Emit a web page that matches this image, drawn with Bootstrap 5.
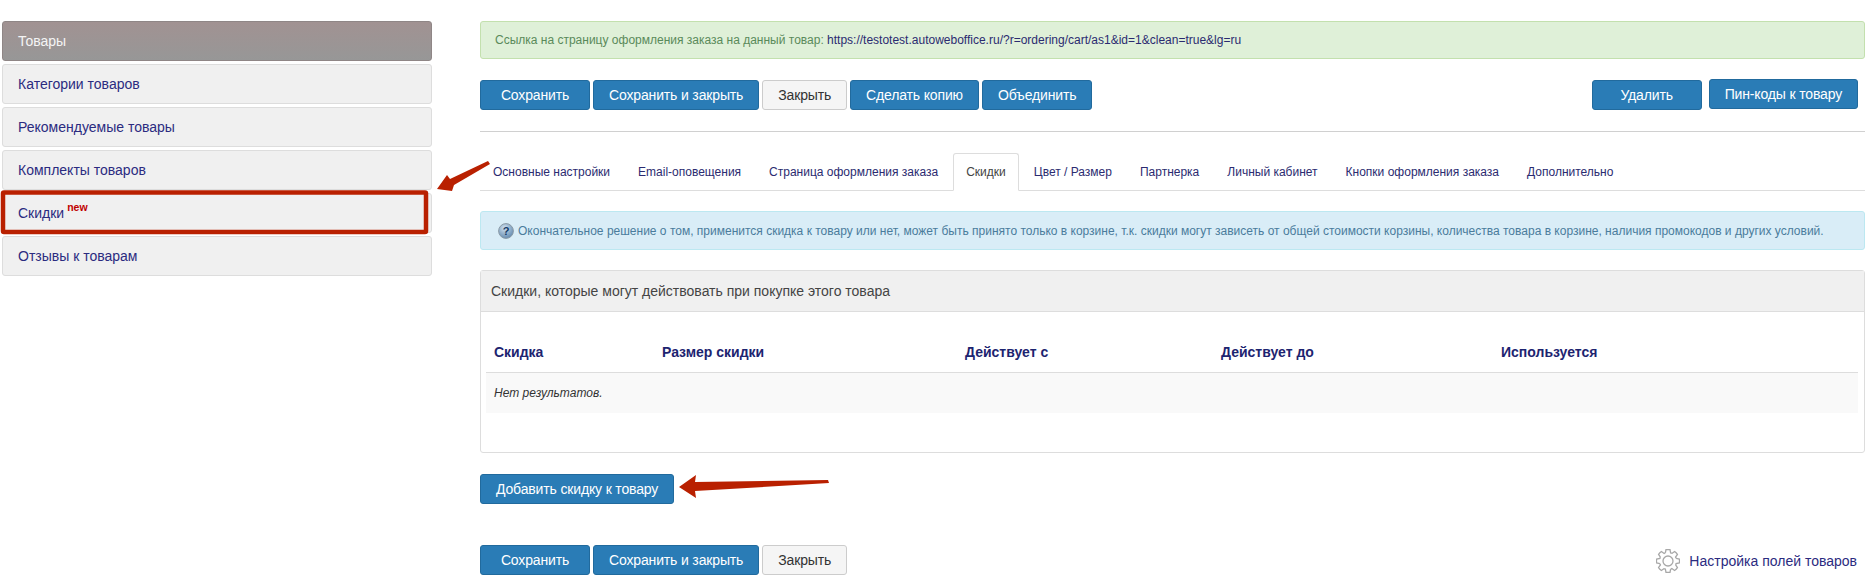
<!DOCTYPE html>
<html lang="ru">
<head>
    <meta charset="UTF-8">
    <meta name="viewport" content="width=device-width, initial-scale=1.0">
    <title>Скидки</title>
    <link href="https://cdn.jsdelivr.net/npm/bootstrap@5.3.0/dist/css/bootstrap.min.css" rel="stylesheet">
    <style>
        body {
            font-family: "Liberation Sans", Arial, sans-serif;
            font-size: 14px;
            color: #333;
            background: #fff;
            overflow: hidden;
        }
        .page-wrap { position: relative; height: 585px; }
        /* боковое меню */
        .side-menu { width: 430px; margin: 21px 0 0 2px; flex: none; gap: 3px; }
        .side-link {
            display: flex;
            align-items: center;
            height: 40px;
            padding: 0 15px;
            background: #f0f0f0;
            border: 1px solid #ddd;
            border-radius: 3px;
            color: #2b2b80;
            text-decoration: none;
        }
        .side-link.is-active {
            background: linear-gradient(#a19292, #979797);
            border-color: #8f8686;
            color: #f4f4f4;
        }
        .side-new { color: #c00000; font-size: 10.5px; font-weight: bold; position: relative; top: -5px; margin-left: 3px; }
        /* основная часть */
        .main-col { width: 1385px; margin: 21px 0 0 48px; flex: none; }
        .note-box {
            font-size: 12px;
            line-height: 16px;
            border-radius: 3px;
            margin-bottom: 21px;
            padding: 10px 14px;
        }
        .note-ok { background: #dff0d8; border: 1px solid #c3e0ae; color: #5a8a5a; height: 38px; }
        .note-ok span { color: #2b2b70; }
        .note-info {
            background: #d9edf7;
            border: 1px solid #bce8f1;
            color: #4a7c9c;
            height: 39px;
            margin-bottom: 20px;
            padding: 10px 14px 10px 17px;
        }
        .btn-blue, .btn-plain {
            font-size: 14px;
            line-height: 28px;
            height: 30px;
            padding: 0 15px;
            border-radius: 3px;
            white-space: nowrap;
            letter-spacing: -0.15px;
        }
        .btn-blue { background: #2a7cb6; border: 1px solid #216a9d; color: #fff; }
        .btn-blue:hover { background: #23709f; border-color: #216a9d; color: #fff; }
        .btn-plain { background: #f5f5f5; border: 1px solid #ccc; color: #333; }
        .btn-wide { min-width: 110px; }
        .btn-up { margin-top: -1px; }
        .btn-row { gap: 3px; }
        .btn-row-right { gap: 7px; padding-right: 7px; }
        .top-rule { border-top: 1px solid #d0d0d0; margin: 21px 0; opacity: 1; }
        .tabs-line { border-bottom: 1px solid #ddd; margin-bottom: 20px; height: 38px; }
        .tabs-line .nav-link {
            font-size: 12px;
            line-height: 37px;
            height: 38px;
            padding: 0 12px;
            margin-right: 2px;
            color: #2b2b70;
            border-radius: 3px 3px 0 0;
        }
        .tabs-line .nav-link.active { color: #444; border-color: #ddd #ddd #fff; }
        .disc-panel { height: 183px; border: 1px solid #ddd; border-radius: 3px; margin-bottom: 21px; }
        .disc-head { height: 41px; line-height: 40px; padding: 0 10px; background: #f0f0f0; border-bottom: 1px solid #ddd; color: #444; }
        .disc-body { padding: 20px 6px 0 5px; }
        .disc-table { table-layout: fixed; margin: 0; width: 100%; }
        .disc-table th {
            height: 40px;
            padding: 2px 8px 0;
            color: #1d2470;
            font-size: 14px;
            border-bottom: 1px solid #ddd;
            vertical-align: middle;
        }
        .disc-table td { height: 41px; padding: 0 8px; background: #f9f9f9; border: 0; font-size: 12px; font-style: italic; color: #333; vertical-align: middle; }
        .add-row { margin-bottom: 41px; }
        .fields-link { color: #2b2b80; text-decoration: none; gap: 9px; padding-right: 8px; margin-top: 2px; }
        .overlay-marks { position: absolute; left: 0; top: 0; pointer-events: none; }
    </style>
</head>
<body>

<div class="page-wrap d-flex align-items-start">
    <!-- Меню слева -->
    <div class="side-menu d-flex flex-column">
        <a href="#" class="side-link is-active">Товары</a>
        <a href="#" class="side-link">Категории товаров</a>
        <a href="#" class="side-link">Рекомендуемые товары</a>
        <a href="#" class="side-link">Комплекты товаров</a>
        <a href="#" class="side-link">Скидки <span class="side-new">new</span></a>
        <a href="#" class="side-link">Отзывы к товарам</a>
    </div>

    <div class="main-col">
        <div class="note-box note-ok">Ссылка на страницу оформления заказа на данный товар: <span>https://testotest.autoweboffice.ru/?r=ordering/cart/as1&amp;id=1&amp;clean=true&amp;lg=ru</span></div>

        <div class="d-flex justify-content-between">
            <div class="d-flex btn-row">
                <button class="btn btn-blue btn-wide">Сохранить</button>
                <button class="btn btn-blue">Сохранить и закрыть</button>
                <button class="btn btn-plain">Закрыть</button>
                <button class="btn btn-blue">Сделать копию</button>
                <button class="btn btn-blue btn-wide">Объединить</button>
            </div>
            <div class="d-flex btn-row-right">
                <button class="btn btn-blue btn-wide">Удалить</button>
                <button class="btn btn-blue btn-up">Пин-коды к товару</button>
            </div>
        </div>

        <hr class="top-rule">

        <ul class="nav nav-tabs tabs-line">
            <li class="nav-item"><a class="nav-link" href="#">Основные настройки</a></li>
            <li class="nav-item"><a class="nav-link" href="#">Email-оповещения</a></li>
            <li class="nav-item"><a class="nav-link" href="#">Страница оформления заказа</a></li>
            <li class="nav-item"><a class="nav-link active" href="#">Скидки</a></li>
            <li class="nav-item"><a class="nav-link" href="#">Цвет / Размер</a></li>
            <li class="nav-item"><a class="nav-link" href="#">Партнерка</a></li>
            <li class="nav-item"><a class="nav-link" href="#">Личный кабинет</a></li>
            <li class="nav-item"><a class="nav-link" href="#">Кнопки оформления заказа</a></li>
            <li class="nav-item"><a class="nav-link" href="#">Дополнительно</a></li>
        </ul>

        <div class="note-box note-info d-flex align-items-center gap-1">
            <svg width="16" height="16" viewBox="0 0 16 16">
                <defs>
                    <radialGradient id="qBall" cx="40%" cy="30%" r="75%">
                        <stop offset="0" stop-color="#cfe0ee"/>
                        <stop offset="1" stop-color="#5f87ad"/>
                    </radialGradient>
                </defs>
                <circle cx="8" cy="8" r="7.4" fill="url(#qBall)" stroke="#8a9aa6" stroke-width="1"/>
                <text x="8" y="12" text-anchor="middle" font-size="11" font-weight="bold" fill="#123a66" font-family="Liberation Sans, sans-serif">?</text>
            </svg>
            <span>Окончательное решение о том, применится скидка к товару или нет, может быть принято только в корзине, т.к. скидки могут зависеть от общей стоимости корзины, количества товара в корзине, наличия промокодов и других условий.</span>
        </div>

        <div class="disc-panel">
            <div class="disc-head">Скидки, которые могут действовать при покупке этого товара</div>
            <div class="disc-body">
                <table class="table disc-table">
                    <colgroup>
                        <col style="width:168px"><col style="width:303px"><col style="width:256px"><col style="width:280px"><col>
                    </colgroup>
                    <thead>
                        <tr><th>Скидка</th><th>Размер скидки</th><th>Действует с</th><th>Действует до</th><th>Используется</th></tr>
                    </thead>
                    <tbody>
                        <tr><td colspan="5">Нет результатов.</td></tr>
                    </tbody>
                </table>
            </div>
        </div>

        <div class="add-row">
            <button class="btn btn-blue">Добавить скидку к товару</button>
        </div>

        <div class="d-flex justify-content-between align-items-center">
            <div class="d-flex btn-row">
                <button class="btn btn-blue btn-wide">Сохранить</button>
                <button class="btn btn-blue">Сохранить и закрыть</button>
                <button class="btn btn-plain">Закрыть</button>
            </div>
            <a href="#" class="fields-link d-flex align-items-center">
                <svg width="24" height="24" viewBox="0 0 24 24" fill="none" stroke="#a8a8a8" stroke-width="1.3">
                    <defs>
                        <path id="gearPart" d="M9.37 3.92L10 .67Q12 .3 14 .67L14.63 3.92Q15.3 4.1 15.86 4.43"/>
                    </defs>
                    <use href="#gearPart"/>
                    <use href="#gearPart" transform="rotate(45 12 12)"/>
                    <use href="#gearPart" transform="rotate(90 12 12)"/>
                    <use href="#gearPart" transform="rotate(135 12 12)"/>
                    <use href="#gearPart" transform="rotate(180 12 12)"/>
                    <use href="#gearPart" transform="rotate(225 12 12)"/>
                    <use href="#gearPart" transform="rotate(270 12 12)"/>
                    <use href="#gearPart" transform="rotate(315 12 12)"/>
                    <circle cx="12" cy="12" r="5"/>
                </svg>
                Настройка полей товаров
            </a>
        </div>
    </div>

    <!-- Красные пометки поверх страницы -->
    <svg class="overlay-marks" width="1874" height="585" viewBox="0 0 1874 585">
        <rect x="3" y="192.5" width="423" height="39.5" rx="1" fill="none" stroke="#b92000" stroke-width="4.5"/>
        <path d="M437 189L447 175L450 179L488 161L490 164L454 185L452 191Z" fill="#b92000"/>
        <path d="M679 487L696 475L695 482L828 480L829 483L695 491L696 498Z" fill="#b92000"/>
    </svg>
</div>

<script src="https://cdn.jsdelivr.net/npm/bootstrap@5.3.0/dist/js/bootstrap.bundle.min.js"></script>
</body>
</html>
